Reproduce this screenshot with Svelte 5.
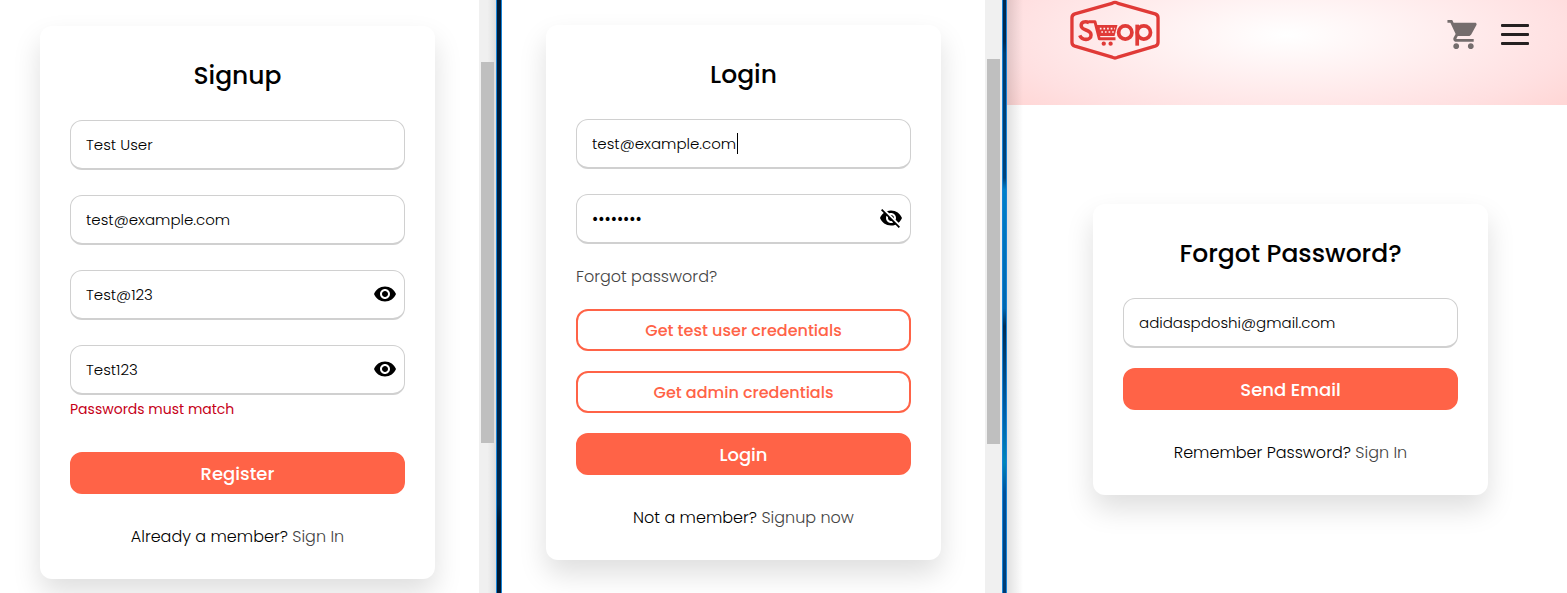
<script lang="ts">
  let name = $state('Test User');
  let signupEmail = $state('test@example.com');
  let password = $state('Test@123');
  let confirm = $state('Test123');
  let loginEmail = $state('test@example.com');
  let loginPassword = $state('testpass');
  let resetEmail = $state('adidaspdoshi@gmail.com');
</script>

{#snippet eye()}
  <svg viewBox="0 0 24 24" width="24" height="24" aria-hidden="true">
    <path d="M12 4.5C7 4.5 2.73 7.61 1 12c1.73 4.39 6 7.5 11 7.5s9.27-3.11 11-7.5c-1.73-4.39-6-7.5-11-7.5zM12 17c-2.76 0-5-2.24-5-5s2.24-5 5-5 5 2.24 5 5-2.24 5-5 5zm0-8c-1.66 0-3 1.34-3 3s1.34 3 3 3 3-1.34 3-3-1.34-3-3-3z" />
  </svg>
{/snippet}

<main class="screens">
  <section class="screen signup" aria-label="Signup">
    <div class="content">
      <form class="card">
        <h1>Signup</h1>
        <div class="fields">
          <div class="field"><input type="text" aria-label="Name" bind:value={name} /></div>
          <div class="field"><input type="email" aria-label="Email" bind:value={signupEmail} /></div>
          <div class="field">
            <input type="text" aria-label="Password" bind:value={password} />
            <button type="button" class="toggle" aria-label="Hide password">{@render eye()}</button>
          </div>
          <div class="field">
            <input type="text" aria-label="Confirm password" bind:value={confirm} />
            <button type="button" class="toggle" aria-label="Hide password">{@render eye()}</button>
          </div>
        </div>
        <p class="error">Passwords must match</p>
        <button type="button" class="primary">Register</button>
        <p class="switch">Already a member? <a href="#signin">Sign In</a></p>
      </form>
    </div>
    <div class="track"><div class="thumb"></div></div>
  </section>

  <div class="edge"></div>

  <section class="screen login" aria-label="Login">
    <div class="content">
      <form class="card">
        <h1>Login</h1>
        <div class="fields">
          <div class="field">
            <input type="email" aria-label="Email" bind:value={loginEmail} />
            <span class="caret"></span>
          </div>
          <div class="field">
            <input type="password" aria-label="Password" bind:value={loginPassword} />
            <button type="button" class="toggle" aria-label="Show password">
              <svg viewBox="0 0 24 24" width="24" height="24" aria-hidden="true">
                <path d="M12 7c2.76 0 5 2.24 5 5 0 .65-.13 1.26-.36 1.83l2.92 2.92c1.51-1.26 2.7-2.89 3.43-4.75-1.73-4.39-6-7.5-11-7.5-1.4 0-2.74.25-3.98.7l2.16 2.16C10.74 7.13 11.35 7 12 7zM2 4.27l2.28 2.28.46.46C3.08 8.3 1.78 10.02 1 12c1.73 4.39 6 7.5 11 7.5 1.55 0 3.03-.3 4.38-.84l.42.42L19.73 22 21 20.73 3.27 3 2 4.27zM7.53 9.8l1.55 1.55c-.05.21-.08.43-.08.65 0 1.66 1.34 3 3 3 .22 0 .44-.03.65-.08l1.55 1.55c-.67.33-1.41.53-2.2.53-2.76 0-5-2.24-5-5 0-.79.2-1.53.53-2.2zm4.31-.78l3.15 3.15.02-.16c0-1.66-1.34-3-3-3l-.17.01z" />
              </svg>
            </button>
          </div>
        </div>
        <a class="forgot" href="#forgot">Forgot password?</a>
        <div class="actions">
          <button type="button" class="outline">Get test user credentials</button>
          <button type="button" class="outline">Get admin credentials</button>
          <button type="button" class="primary">Login</button>
        </div>
        <p class="switch">Not a member? <a href="#signup">Signup now</a></p>
      </form>
    </div>
    <div class="track"><div class="thumb"></div></div>
  </section>

  <div class="edge bright"></div>

  <section class="screen reset" aria-label="Forgot password">
    <header>
      <a class="logo" href="#home" aria-label="Shop">
        <svg viewBox="0 0 92 62" width="90" height="61">
          <path d="M43 3.2Q46 1.4 49 3.2L87 14Q90 15 90 18V43Q90 46 87 47L49 58.2Q46 60 43 58.2L5 47Q2 46 2 43V18Q2 15 5 14Z" fill="none" stroke="#e03a37" stroke-width="3.4" stroke-linejoin="round" />
          <path d="M19.500 23C15 20.500 11 23 11.500 26.500C12 31.500 21.500 29.500 21.500 35.500C21.500 41.500 12 41.500 10 36" fill="none" stroke="#e03a37" stroke-width="3.600" />
          <path d="M19 22H25.500L30 39.500H46.500" fill="none" stroke="#e03a37" stroke-width="3" stroke-linejoin="round" />
          <path d="M26 25.500H48.500L45.500 36.500H29Z" fill="#e03a37" />
          <path d="M30.500 29H46M32 32.500H45" stroke="#fff0f0" stroke-width="1.700" stroke-dasharray="1.700 2" />
          <circle cx="34.500" cy="44.500" r="2.200" fill="#e03a37" />
          <circle cx="41.500" cy="44.500" r="2.200" fill="#e03a37" />
          <circle cx="56.500" cy="33" r="6.800" fill="none" stroke="#e03a37" stroke-width="3.800" />
          <circle cx="75.500" cy="33" r="6.800" fill="none" stroke="#e03a37" stroke-width="3.800" />
          <path d="M68.700 25V46.500" stroke="#e03a37" stroke-width="3.800" />
        </svg>
      </a>
      <nav>
        <button type="button" class="icon" aria-label="Cart">
          <svg viewBox="0 0 24 24" width="35" height="35" fill="#756d6d">
            <path d="M7 18c-1.100 0-1.990.9-1.990 2S5.900 22 7 22s2-.9 2-2-.9-2-2-2zM1 2v2h2l3.600 7.590-1.350 2.450c-.16.28-.25.61-.25.96 0 1.100.9 2 2 2h12v-2H7.420c-.14 0-.25-.11-.25-.25l.03-.12.9-1.630h7.450c.75 0 1.410-.41 1.750-1.030l3.580-6.490c.08-.14.12-.31.12-.48 0-.55-.45-1-1-1H5.210l-.94-2H1zm16 16c-1.100 0-1.990.9-1.990 2s.89 2 1.990 2 2-.9 2-2-.9-2-2-2z" />
          </svg>
        </button>
        <button type="button" class="icon" aria-label="Menu">
          <svg viewBox="0 0 28 22" width="28" height="22" fill="#252020">
            <rect width="28" height="3" rx="1" />
            <rect y="9" width="28" height="3" rx="1" />
            <rect y="18" width="28" height="3" rx="1" />
          </svg>
        </button>
      </nav>
    </header>
    <div class="content">
      <form class="card">
        <h1>Forgot Password?</h1>
        <div class="fields">
          <div class="field"><input type="email" aria-label="Email" bind:value={resetEmail} /></div>
        </div>
        <button type="button" class="primary">Send Email</button>
        <p class="switch">Remember Password? <a href="#signin">Sign In</a></p>
      </form>
    </div>
  </section>
</main>

<style>
  :global(body) {
    margin: 0;
    background: #fff;
    color: #000;
    font-family: Poppins, Inter, sans-serif;
    font-size: 16px;
    line-height: 24px;
  }
  .screens {
    display: grid;
    grid-template-columns: 496fr 6px 500fr 5px 560fr;
    height: 100vh;
    overflow: hidden;
  }
  .screen {
    display: flex;
    min-width: 0;
  }
  .content {
    flex: 1;
    min-width: 0;
    display: flex;
    justify-content: center;
    align-items: flex-start;
    padding-top: 25px;
  }
  .signup .content {
    padding: 26px 4px 0 0;
  }
  .reset {
    flex-direction: column;
    background: linear-gradient(90deg, rgba(0, 0, 0, 0.12), transparent 16px);
  }
  .reset .content {
    flex: none;
    padding: 99px 0 0 7px;
  }
  .card {
    box-sizing: border-box;
    width: 100%;
    max-width: 395px;
    padding: 30px;
    display: flex;
    flex-direction: column;
    background: #fff;
    border-radius: 12px;
    box-shadow: 0 14px 28px rgba(0, 0, 0, 0.13);
  }
  h1 {
    margin: 0 0 24px;
    text-align: center;
    font-size: 25px;
    line-height: 40px;
    font-weight: 500;
  }
  .fields {
    display: grid;
    gap: 25px;
  }
  .field {
    position: relative;
  }
  input {
    display: block;
    box-sizing: border-box;
    width: 100%;
    height: 50px;
    padding: 0 15px;
    border: 1px solid #d0d0d0;
    border-bottom-width: 2px;
    border-radius: 12px;
    background: #fff;
    color: #000;
    font: 300 15px Poppins, Inter, sans-serif;
    outline: none;
  }
  input[type='password'] {
    font-size: 17px;
  }
  button {
    font-family: inherit;
    cursor: pointer;
  }
  .toggle {
    position: absolute;
    top: 12px;
    right: 8px;
    width: 24px;
    height: 24px;
    padding: 0;
    border: 0;
    background: none;
  }
  .toggle svg,
  .logo svg,
  .icon svg {
    display: block;
  }
  .caret {
    position: absolute;
    top: 14px;
    left: 161px;
    width: 1px;
    height: 21px;
    background: #000;
  }
  .error {
    margin: 2px 0 31px;
    color: #c60018;
    font-size: 14px;
  }
  .primary,
  .outline {
    box-sizing: border-box;
    height: 42px;
    padding: 0;
    border: 2px solid #ff6347;
    border-radius: 12px;
    font-weight: 500;
  }
  .primary {
    background: #ff6347;
    color: #fff;
    font-size: 18px;
  }
  .outline {
    background: #fff;
    color: #ff6347;
    font-size: 16px;
  }
  .forgot {
    align-self: flex-start;
    margin: 21px 0 20px;
  }
  .actions {
    display: grid;
    gap: 20px;
  }
  .reset .primary {
    margin-top: 20px;
  }
  .switch {
    margin: 31px 0 0;
    text-align: center;
    font-weight: 300;
  }
  a {
    color: #444;
    font-weight: 300;
    text-decoration: none;
  }
  .track {
    box-sizing: border-box;
    width: 17px;
    padding: 62px 2px 0;
    background: linear-gradient(90deg, #f0f0f0 50%, #dedede);
  }
  .login .track {
    padding-top: 59px;
    background: #f0f0f0;
  }
  .thumb {
    height: 381px;
    background: #bfbfbf;
  }
  .login .thumb {
    height: 385px;
  }
  .edge {
    box-sizing: border-box;
    border: solid #1683d8;
    border-width: 0 1px;
    background: linear-gradient(#001a35, #002448 65%, #002a50 85%, #001830 88%);
  }
  .edge.bright {
    background: linear-gradient(#002850 7%, #003c70 9%, #00427a 30%, #0080c8 32%, #0065ad 52%, #002c55 55%, #0060a8 70%, #0085b8 78%, #00509a 83%, #003a70);
  }
  header {
    box-sizing: border-box;
    height: 105px;
    padding: 0 38px 0 63px;
    display: flex;
    justify-content: space-between;
    background:
      linear-gradient(90deg, rgba(0, 0, 0, 0.12), transparent 16px),
      radial-gradient(ellipse 400px 125px at 50% 35px, #fff 0%, #ffe0e1 70%, #ffd6d5 90%);
  }
  nav {
    display: flex;
    align-items: center;
    gap: 20px;
    height: 69px;
  }
  .icon {
    padding: 0;
    border: 0;
    background: none;
  }
</style>
